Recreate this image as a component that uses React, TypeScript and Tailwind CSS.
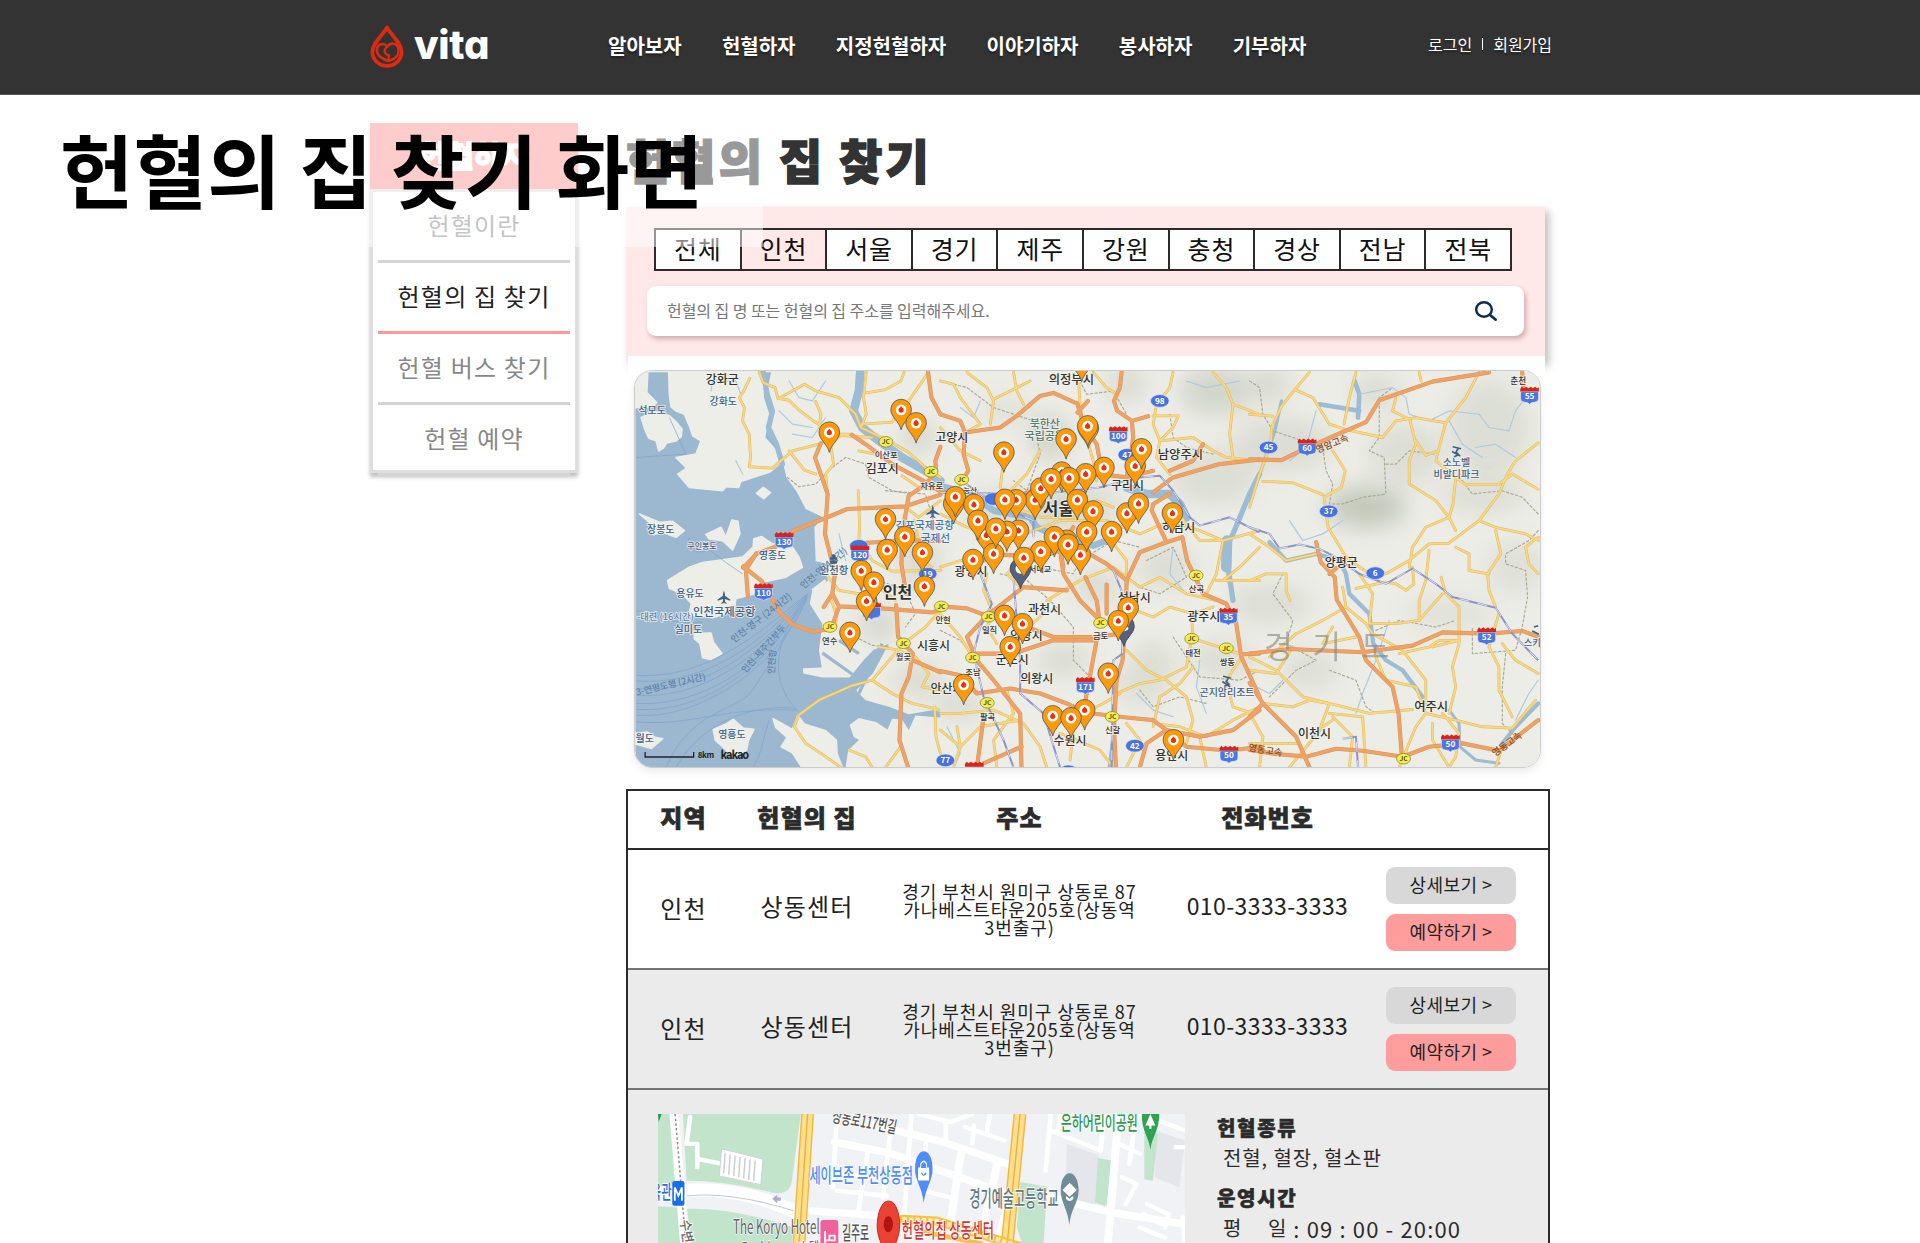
import React from "react";

type Pt = [number, number];
type Tag = [number, number, string];
type Label = [number, number, string, number, string?, number?];

/* The region map is drawn in three side-by-side panes at three units per pixel. */
const PANES = ["translate(625 360) scale(0.33333)", "translate(940 360) scale(0.33333)", "translate(1250 360) scale(0.33333)"];

const LAND = [
  "M28,34 65,34 62,95 92,125 75,138 28,140Z",
  "M128,34 410,34 412,110 428,160 416,230 447,265 460,310 432,334 345,362 338,380 300,378 290,390 190,380 155,340 182,322 150,290 210,280 225,240 200,225 190,195 175,160 150,150 135,138 130,100Z",
  "M45,170 85,152 130,165 152,185 168,205 165,228 150,240 122,246 112,262 98,270 90,240 68,232 56,205Z",
  "M125,660 190,620 230,606 350,590 382,560 384,535 408,528 440,550 500,560 520,590 530,620 480,650 400,668 385,700 330,715 325,750 300,760 260,772 190,762 196,730 170,700 130,684Z",
  "M40,460 100,485 140,482 175,510 150,530 110,515 82,522 78,492Z",
  "M240,522 285,500 300,530 318,478 336,482 342,520 320,568 290,540 250,535Z",
  "M392,398 412,380 434,396 414,414Z",
  "M205,820 255,818 262,845 288,880 256,898 230,892 222,850 205,835Z",
  "M262,1108 300,1092 322,1078 352,1104 384,1108 368,1140 362,1170 320,1190 290,1160 268,1140Z",
  "M28,1120 64,1116 86,1132 110,1136 76,1165 28,1152Z",
  "M442,1076 500,1108 516,1066 536,1092 600,1112 632,1140 634,1180 650,1222 528,1222 500,1178 466,1160 484,1132 450,1102Z",
];
const SEA =
  "M28,34 408,34 436,34 424,90 442,150 432,200 452,240 470,300 482,350 512,392 540,445 592,470 566,500 570,602 604,610 606,662 560,690 552,730 590,790 580,870 588,922 532,924 532,940 590,952 672,952 714,900 744,868 790,850 742,940 692,990 720,1020 790,1040 850,1062 920,1050 945,1055 945,1072 870,1066 850,1110 830,1078 800,1076 786,1108 752,1086 700,1074 672,1094 684,1130 700,1140 668,1170 660,1222 28,1222Z";

const ORANGE: string[][] = [
  [
    "500,512 600,472 665,445 840,437 945,402",
    "585,248 568,290 606,400 598,520 628,640 620,700 594,740",
    "678,222 720,250 800,310 890,358 945,392",
    "945,258 930,300 932,330 900,372 850,405 830,520 828,612 842,700",
    "908,34 918,110 945,160",
    "620,700 640,738 770,744 920,756 945,748",
    "640,740 616,806 560,814 500,792 462,756 408,662 352,618",
    "392,578 360,628 366,706",
    "450,558 392,580 352,622",
    "812,734 818,830 862,880 850,950 828,1000 822,1140 848,1222",
    "866,902 945,936",
    "700,548 830,540 945,540",
  ],
  [
    "0,160 60,180 74,215 70,280 84,330 60,370",
    "74,215 180,200 230,165 300,105 340,96 412,128 430,190 470,250 480,300",
    "545,34 540,80 522,120 532,150 576,180 580,230 570,300 560,350",
    "576,180 625,166",
    "0,390 100,420 180,410 250,400 300,380 400,360 480,340 560,350 640,330",
    "640,395 700,350 770,330 840,310 960,296",
    "690,330 760,300 790,250",
    "130,600 152,580 300,590 360,570 370,640 420,720 480,780 540,800",
    "370,560 430,570 500,610 560,660 558,760 548,900 530,960 522,1100 528,1222",
    "560,660 600,575 680,545 636,450 640,430 690,400",
    "680,545 728,530 742,600 790,700 860,730 890,790 905,890 960,1010",
    "0,738 80,744 140,766 250,680 380,690",
    "140,766 210,770 260,800 340,830 470,830 540,820",
    "140,766 80,830 110,900 160,960 240,1060 244,1222",
    "100,880 220,880 340,840 470,840 440,1000 430,1060",
    "0,932 60,945 110,1000 210,985 300,1000 380,1030 440,1058 560,1072 640,1080 680,1110 780,1130 880,1110 960,1050",
    "436,650 470,720 480,790",
    "500,672 500,760",
    "244,1160 130,1210",
    "130,1070 110,1222",
    "680,1110 620,1150 600,1222",
    "905,882 960,880",
    "690,1120 740,1160 868,1172 960,1160",
    "400,500 360,560 370,620",
    "444,120 412,155",
  ],
  [
    "0,296 96,298 150,272 270,218 350,184 390,118 550,62 720,34",
    "200,545 214,605 256,650 262,718 330,830 350,900 430,980 448,1060 458,1190",
    "0,880 120,866 340,876 490,856 580,816 720,820 820,812 870,830",
    "0,968 40,1030 140,1130 180,1222",
    "40,1030 0,1070",
    "0,1170 80,1182 170,1190 260,1166 340,1172 460,1190 540,1160 640,1150 750,1172 868,1080",
    "820,34 824,90",
    "240,640 262,622",
  ],
];

const YELLOW: string[][] = [
  [
    "372,52 354,90 340,110 356,140 350,180 370,220 374,290 370,318 440,322 500,270 580,250 650,224 740,230",
    "400,34 412,65 448,80 456,112 490,118 520,148 560,178 600,204 640,220 680,220",
    "460,112 536,70 570,90 640,110 690,160 706,200",
    "570,122 586,160 582,190 600,210",
    "490,270 536,328 570,340",
    "722,34 714,110 722,160 706,200 790,240 850,275 900,320 945,350",
    "722,96 780,86 826,60 836,34",
    "710,190 800,184 850,120 905,40",
    "698,390 702,490 700,540 740,600 800,632 945,630",
    "616,260 624,310 600,340 606,400",
    "600,640 640,690 700,700 760,680 810,720",
    "615,715 632,760 630,800",
    "740,960 680,976 580,1020 520,1064 506,1100 540,1150 600,1190 646,1222",
    "740,960 800,890 834,850 900,800 945,750",
    "740,960 800,1000 860,1030 940,1048",
    "928,1040 932,1130 945,1180",
    "760,860 810,868 870,890 910,940 890,980 945,990",
    "866,480 880,540 870,590 920,620",
    "840,440 880,470 945,420",
    "670,1170 720,1190 740,1222",
    "830,345 880,380 945,390",
    "780,1222 826,1160",
    "700,270 760,282",
  ],
  [
    "0,60 40,70 60,110 120,190 84,210",
    "80,34 140,80 160,120 150,190",
    "270,60 160,115",
    "220,34 230,90 250,130",
    "416,60 420,130 430,200 460,300 470,360",
    "460,34 500,80 530,100",
    "700,34 690,80 650,130 640,190 660,240 650,290 690,340",
    "640,165 716,165 700,200 660,240 760,230 820,270 860,290 960,300",
    "820,34 860,80 880,130 960,160",
    "880,130 870,220 880,290",
    "0,200 60,270 120,300",
    "190,300 180,380 220,440 300,470 400,470 470,420 520,440",
    "0,460 80,500 200,540 360,480 500,480 600,520 690,480 780,510 850,540 960,510",
    "490,510 560,600 560,650",
    "0,620 60,600 130,600",
    "140,640 130,690 160,760 140,800 170,850",
    "320,720 420,660 520,620 600,680 660,650 740,700 830,720",
    "700,440 780,540 850,540 830,640 800,700",
    "330,720 300,770 230,830",
    "0,760 60,830 97,892 160,960",
    "560,740 640,770 690,740 760,760 820,740",
    "755,760 760,835 900,880",
    "756,835 740,920 660,960 600,970 530,1000",
    "760,920 720,970 660,1010 640,1100",
    "560,870 620,930 680,960 740,1010 760,1080 740,1150",
    "540,1000 490,1030 430,1060 400,1110 390,1200",
    "0,1060 60,1060 160,1050 250,1090 300,1160 320,1222",
    "0,1110 60,1160 120,1100 240,1080",
    "40,1222 60,1160 50,1100",
    "640,1090 720,1100 800,1130 880,1080 960,1040",
    "560,1090 600,1140 560,1222",
    "780,1130 800,1222",
    "200,990 220,1060 160,1140 170,1222",
    "360,1120 480,1170 520,1222",
    "270,560 200,640 240,680",
    "830,660 960,660",
    "960,560 900,620 850,660",
    "900,900 860,960 880,1040 940,1060",
    "300,270 260,340 200,400",
  ],
  [
    "180,34 136,86 96,136 66,200 64,250 30,340 0,440",
    "136,86 190,110 240,190 290,206 400,230 440,180 500,170 590,186 650,110 690,34",
    "320,34 300,110 284,190",
    "0,160 70,166",
    "250,270 288,330 276,380 224,410 236,500 290,590 360,640 410,640 480,600 540,550 600,548 690,480 720,440 750,400 775,340 800,300 868,246",
    "40,362 130,366 220,402",
    "440,110 430,150 482,176 500,250 480,300 480,370 560,420 600,470 620,510",
    "590,186 570,260 560,300 620,350 612,430 600,470 530,500 490,560 480,620",
    "500,240 530,284 566,270",
    "620,350 650,372 750,370 790,340 868,386",
    "690,480 740,500 830,520 868,540",
    "740,510 756,580 716,640 720,690 740,740",
    "620,560 660,580 660,630 720,640",
    "0,520 60,560 110,600 200,580",
    "0,660 50,640 110,640 110,690 122,720",
    "540,570 530,660 510,720 510,780",
    "576,650 590,700 630,740 630,850 610,920 620,980 600,1060",
    "320,684 410,665 440,670 470,690 494,670 490,620",
    "280,680 290,740 350,790 370,820 460,870 530,960 530,1040",
    "330,640 370,700 360,790 440,790 510,780 580,700",
    "290,740 220,780 140,820 60,890",
    "250,800 220,850 320,830",
    "0,890 80,930 160,1010 240,1030 360,1060 490,1048",
    "40,1030 130,1040 180,1020 240,1030 210,1110",
    "0,930 80,940 130,860",
    "240,1060 340,1070 350,1222",
    "120,1222 220,1100 250,1080",
    "380,890 410,960 500,980 530,1060 620,1080 700,1100 790,1104 860,1020",
    "450,1222 500,1100 530,1060",
    "300,1222 310,1130 250,1070",
    "550,1090 550,1140 600,1222",
    "580,1060 630,1120 620,1190 600,1222",
    "750,760 720,860 750,920 750,990 790,1070",
    "760,850 800,900 868,940",
    "0,1150 150,1150",
    "740,1222 760,1160",
    "868,530 830,560 840,610 868,640",
    "550,860 630,840 570,840 540,860 450,880",
    "30,1222 40,1130 0,1060",
    "510,34 516,60",
  ],
];

const RIVERS: [number, string, number][] = [
  [0, "412,34 424,100 440,150 428,200 452,250 470,310", 16],
  [0, "704,34 700,90 684,150 710,200 760,240 830,290 900,330 945,360", 26],
  [1, "0,376 90,400 160,450 270,470 290,500 380,540 460,555 500,540", 20],
  [1, "560,380 620,400 690,400 720,430 740,470", 26],
  [1, "960,340 930,400 880,520 860,560 868,640 880,720", 16],
  [1, "862,540 860,620", 32],
  [1, "520,1140 510,1222", 14],
  [2, "96,120 76,210 20,370 0,420", 10],
  [2, "316,60 330,100 326,170", 14],
  [2, "210,130 270,140 330,150", 14],
  [2, "60,545 110,600 200,580 270,600 290,640 300,700 360,760 372,850 410,900 460,930 520,1010", 13],
  [2, "600,1050 630,1090 632,1160 680,1200 750,1210", 9],
  [2, "868,1030 800,1100 760,1150", 12],
];
const STREAMS: [number, string][] = [
  [2, "330,100 380,90 430,80 470,110 480,160 540,180 600,150 690,160 720,200 780,210 800,150 830,110"],
  [2, "420,780 380,900 340,1000 320,1060"],
  [2, "120,480 160,540 220,520 280,480"],
  [2, "868,960 840,1000 800,1080"],
  [2, "600,180 640,250 700,290"],
  [2, "200,150 170,260 120,300"],
  [0, "490,60 520,110 560,120 600,60"],
  [0, "500,220 560,230 600,170"],
  [0, "460,150 500,190 560,200"],
  [0, "640,520 660,600"],
  [0, "330,300 350,340"],
  [0, "255,90 260,60 330,60 345,100"],
  [1, "740,60 800,80 900,60"],
  [1, "700,560 690,640 730,690"],
  [1, "780,900 770,980 800,1060"],
  [1, "590,1000 640,1050 700,1070"],
  [1, "120,120 100,170 60,140"],
  [1, "20,1100 60,1180 40,1222"],
  [2, "100,960 60,1000 20,980"],
  [2, "680,260 740,250 800,290"],
];
const RAILS: [number, string][] = [
  [1, "60,357 120,400 190,440 280,480 280,530"],
  [1, "0,395 300,400 480,380 600,350 660,345 700,390 750,470 780,495 870,470 960,515"],
  [1, "120,640 155,730 120,800 100,880 130,1010 190,1140 220,1222"],
  [1, "520,630 545,690 548,880 520,900 515,1222"],
  [1, "220,660 240,900 240,1000 310,1060 360,1222"],
  [2, "0,500 60,520 90,564 150,552 210,565 260,590 330,640 410,670 490,624 560,670 610,710 740,742 790,820 868,900"],
  [2, "280,1136 320,1130 326,1222"],
];
const BORDERS: [number, string][] = [
  [0, "485,350 520,378 570,370 620,320 660,290 720,310 730,350 800,390 860,400 890,380"],
  [0, "720,600 760,660 840,690 870,760 840,800"],
  [0, "780,390 900,400 930,500"],
  [0, "690,830 740,855 790,860"],
  [1, "0,60 80,80 160,140 280,180 300,280 260,390 220,360"],
  [1, "420,60 440,100 520,90 560,160"],
  [1, "690,160 700,230 740,260 820,280"],
  [1, "240,560 300,620 400,640 420,600 520,540 600,560"],
  [1, "620,600 700,560 740,650 660,700 600,680"],
  [1, "180,640 260,660 330,720 400,800 400,900 460,960 420,1040"],
  [1, "0,810 60,840 130,920"],
  [1, "700,830 780,950 900,960 960,930"],
  [1, "600,990 640,1040 720,1010 800,1030"],
  [2, "0,60 30,80 40,160 70,210 160,240 220,260 230,330 250,370 240,430 280,430 340,410 410,400 405,290 360,270 390,230 390,110 430,80"],
  [2, "410,310 440,310 480,270 560,280"],
  [2, "640,360 670,400 760,390 820,410 868,460"],
  [2, "868,510 840,540 770,580 770,610 830,630 836,710 820,800 800,870 670,880 670,800"],
  [2, "100,640 70,700 130,780 110,850 200,900 140,930 60,1010"],
  [2, "380,810 450,780 560,800 620,780"],
  [2, "240,930 320,960 350,1040 380,1060"],
  [2, "770,880 760,980 760,1090 800,1130"],
];
const RELIEF: [number, number, number, number, number, number][] = [
  [2, 350, 440, 120, 60, 0.32], [2, 100, 250, 150, 80, 0.13], [2, 470, 280, 110, 90, 0.12], [2, 720, 200, 120, 140, 0.12],
  [2, 700, 400, 130, 60, 0.11], [2, 60, 730, 130, 60, 0.12], [2, 180, 930, 90, 60, 0.11], [2, 60, 70, 60, 50, 0.16], [2, 800, 620, 90, 80, 0.1],
  [2, 600, 760, 140, 50, 0.09], [2, 380, 90, 70, 60, 0.12],
  [1, 830, 90, 110, 70, 0.2], [1, 560, 70, 60, 50, 0.16], [1, 820, 350, 130, 80, 0.12], [1, 330, 230, 60, 70, 0.2],
  [1, 470, 680, 70, 50, 0.14], [1, 680, 620, 90, 70, 0.12], [1, 850, 900, 100, 60, 0.12], [1, 370, 900, 80, 50, 0.14], [1, 640, 900, 70, 60, 0.11],
  [1, 600, 980, 90, 60, 0.1], [1, 200, 150, 80, 40, 0.1], [1, 220, 450, 160, 60, 0.13], [1, 60, 1040, 80, 40, 0.15], [1, 420, 440, 120, 80, 0.12],
  [0, 880, 230, 50, 50, 0.18], [0, 760, 790, 60, 50, 0.18], [0, 880, 600, 70, 90, 0.13], [0, 880, 960, 80, 50, 0.14],
];
const PINS: Pt[][] = [
  [[611, 215], [827, 147], [872, 187], [780, 476], [785, 568], [838, 529], [891, 576], [707, 631], [897, 678], [723, 722], [745, 666], [673, 817]],
  [
    [425, 2], [191, 275], [445, 203], [443, 196], [378, 235], [586, 316], [605, 265], [365, 335], [492, 321], [437, 340], [387, 352], [285, 418],
    [302, 383], [333, 355], [40, 430], [45, 409], [101, 432], [228, 418], [194, 417], [412, 418], [459, 452], [561, 458], [596, 429], [698, 458],
    [138, 524], [113, 480], [235, 510], [200, 513], [160, 580], [167, 504], [98, 598], [302, 573], [251, 592], [380, 540], [343, 529], [421, 583],
    [384, 552], [440, 514], [515, 514], [193, 766], [247, 791], [210, 860], [565, 742], [535, 782], [505, 940], [70, 974], [434, 1050], [338, 1068],
    [393, 1074], [701, 1140],
  ],
  [],
];
const NAVY_PINS: Pt[] = [[241, 625], [552, 798]];
const SHIELDS: Tag[][] = [
  [[475, 541, "130"], [413, 695, "110"], [703, 580, "120"], [738, 752, ""]],
  [[535, 223, "100"], [436, 977, "171"], [866, 769, "35"], [868, 1184, "50"], [102, 1232, ""]],
  [[173, 260, "60"], [842, 104, "55"], [713, 828, "52"], [604, 1150, "50"]],
];
const OVALS: Tag[][] = [
  [[907, 640, "19"], [700, 556, ""]],
  [[660, 120, "98"], [562, 282, "47"], [585, 1157, "42"], [15, 1201, "77"], [160, 415, ""], [385, 1234, ""]],
  [[57, 260, "45"], [238, 452, "37"], [378, 638, "6"]],
];
const JUNCTIONS: Pt[][] = [
  [[781, 243], [917, 333], [613, 800], [834, 849], [948, 738]],
  [[64, 357], [145, 769], [97, 892], [141, 1028], [482, 788], [769, 645], [756, 835], [860, 864], [517, 1070]],
  [[463, 1196]],
];
const SEA_INK = "#3f6186";
const LABELS: Label[][] = [
  [
    [289, 68, "강화군", 36], [292, 131, "강화도", 30, SEA_INK], [78, 158, "석모도", 30, SEA_INK], [104, 516, "장봉도", 30, SEA_INK],
    [440, 594, "영종도", 30, SEA_INK], [228, 564, "구인봉도", 24, SEA_INK], [192, 710, "용유도", 30, SEA_INK], [295, 767, "인천국제공항", 34, SEA_INK],
    [187, 818, "실미도", 30, SEA_INK], [318, 1134, "영흥도", 30, SEA_INK], [56, 1145, "월도", 30, SEA_INK], [625, 640, "인천항", 31, SEA_INK],
    [770, 338, "김포시", 36], [782, 293, "이산포", 25], [919, 384, "자유로", 25], [898, 506, "김포국제공항", 32, "#3f74b0"], [930, 545, "국제선", 32, "#3f74b0"],
    [612, 850, "연수", 25], [834, 900, "월곶", 25], [816, 712, "인천", 48], [924, 868, "시흥시", 36], [953, 787, "안현", 25],
    [118, 778, "-대련 (16시간)", 28, "#5b82ad"], [412, 780, "인천-영구 (24시간)", 28, "#6084ab", -38], [420, 872, "인천-제주간부두", 27, "#6084ab", -48],
    [448, 905, "인천항", 27, "#6084ab", -86], [136, 982, "3-연평도행 (2시간)", 27, "#5b82ad", -13], [600, 630, "인천-연(4시간)", 28, "#6084ab", -40],
  ],
  [
    [394, 68, "의정부시", 37], [314, 200, "북한산", 33, "#5d7a76"], [314, 238, "국립공원", 33, "#5d7a76"], [34, 244, "고양시", 36], [722, 295, "남양주시", 37],
    [563, 388, "구리시", 36], [355, 464, "서울", 50], [717, 513, "하남시", 36], [92, 646, "광명시", 36], [300, 634, "서대교", 24], [770, 694, "산곡", 25],
    [583, 724, "성남시", 36], [313, 761, "과천시", 36], [148, 818, "일직", 25], [482, 836, "금토", 25], [792, 783, "광주시", 36], [258, 838, "의왕시", 36],
    [216, 911, "군포시", 36], [98, 943, "조남", 25], [290, 968, "의왕시", 36], [20, 997, "안산시", 36], [760, 886, "태전", 25], [863, 914, "쌍동", 25],
    [862, 1006, "곤지암리조트", 30, SEA_INK], [142, 1079, "팔곡", 25], [390, 1156, "수원시", 36], [518, 1120, "신갈", 25], [696, 1200, "용인시", 36], [90, 398, "능산", 22],
  ],
  [
    [808, 68, "춘천", 26], [622, 316, "소노벨", 30, SEA_INK], [622, 351, "비발디파크", 30, SEA_INK], [276, 620, "양평군", 36], [546, 1053, "여주시", 37], [195, 1133, "이천시", 36],
    [252, 258, "영암고속", 28, "#8a4a22", -22], [780, 1160, "영동고속", 28, "#8a4a22", -36], [46, 1180, "영동고속", 28, "#8a4a22", 10], [850, 858, "스키", 28, SEA_INK],
  ],
];

const PIN = "M0,60 C-6,34 -31,22 -31,-1 A31,31 0 1 1 31,-1 C31,22 6,34 0,60Z";
const PLANE = "M0,-19 3,-8 3,-3 19,8 19,12 3,7 3,15 8,19 8,21 0,19 -8,21 -8,19 -3,15 -3,7 -19,12 -19,8 -3,-3 -3,-8Z";

function Roads({ sets, edge, fill, w }: { sets: string[][]; edge: string; fill: string; w: number }) {
  return (
    <g fill="none" strokeLinejoin="round" strokeLinecap="round">
      {[0, 1].map((pass) =>
        sets.map((s, p) => (
          <g key={`${pass}-${p}`} transform={PANES[p]} stroke={pass ? fill : edge} strokeWidth={pass ? w : w + 3}>
            {s.map((pts, i) => <polyline key={i} points={pts} />)}
          </g>
        )),
      )}
    </g>
  );
}

function RegionMap() {
  return (
    <svg viewBox="634 370 907 397" className="block h-full w-full font-['Noto_Sans_CJK_KR',sans-serif]">
      <defs>
        <filter id="relief" x="-80%" y="-80%" width="260%" height="260%"><feGaussianBlur stdDeviation="34" /></filter>
      </defs>
      <rect x="634" y="370" width="907" height="397" fill="#ecede7" />
      {RELIEF.map(([p, x, y, rx, ry, o], i) => (
        <g key={i} transform={PANES[p]}><ellipse cx={x} cy={y} rx={rx} ry={ry} fill="#6f7a5c" opacity={o} filter="url(#relief)" /></g>
      ))}
      <g transform={PANES[0]}>
        <path d={SEA} fill="#9cb8d0" />
        {LAND.map((d, i) => <path key={i} d={d} fill="#edeee8" strokeLinejoin="round" stroke="#edeee8" strokeWidth="5" />)}
        <path d="M590,878 680,942 M700,1000 770,850 M640,840 700,880" stroke="#9cb8d0" strokeWidth="10" fill="none" />
        <path d="M560,690 600,660 M555,720 600,740" stroke="#ecede7" strokeWidth="9" />
        <g fill="none" stroke="#7fa3cb" strokeWidth="2.5" opacity="0.85">
          <path d="M30,290 180,280 130,170" />
          <path d="M545,700 C420,800 250,960 30,945" />
          <path d="M545,700 C420,830 250,980 30,962" />
          <path d="M545,702 C420,850 250,1000 30,985" />
          <path d="M545,704 C430,870 240,1020 30,1005" />
          <path d="M545,706 C440,890 250,1040 30,1030" />
          <path d="M545,708 C440,900 250,1060 30,1048" />
          <path d="M545,710 C450,940 200,1080 30,1065" />
          <path d="M30,1085 C200,1100 280,1040 515,1050" />
          <path d="M545,700 C440,850 430,960 515,1052" />
          <path d="M120,1222 C200,1040 330,1060 380,990 C440,900 500,800 545,712" />
          <path d="M150,1222 C230,1080 390,1030 510,1045" />
          <path d="M30,750 C120,780 160,790 230,786" />
          <path d="M240,560 C290,600 320,620 350,640" />
          <path d="M380,1222 C410,1180 410,1140 430,1080" />
          <path d="M190,530 C180,560 200,580 240,572" />
        </g>
      </g>
      <g fill="none" strokeLinejoin="round" strokeLinecap="round">
        {RIVERS.map(([p, d, w], i) => <g key={i} transform={PANES[p]}><polyline points={d} stroke="#9cbbd4" strokeWidth={w} /></g>)}
        {STREAMS.map(([p, d], i) => <g key={i} transform={PANES[p]}><polyline points={d} stroke="#adc9de" strokeWidth="3.5" /></g>)}
        {BORDERS.map(([p, d], i) => <g key={i} transform={PANES[p]}><polyline points={d} stroke="#aaa892" strokeWidth="3.5" strokeDasharray="7 7" /></g>)}
      </g>
      <Roads sets={YELLOW} edge="#deba66" fill="#fad67c" w={5.5} />
      <Roads sets={ORANGE} edge="#d7935e" fill="#f0a263" w={9.5} />
      <g fill="none" strokeLinejoin="round">
        {RAILS.map(([p, d], i) => (
          <g key={i} transform={PANES[p]}>
            <polyline points={d} stroke="#8c95c4" strokeWidth="6" />
            <polyline points={d} stroke="#dfe2f0" strokeWidth="3" strokeDasharray="30 26" />
          </g>
        ))}
      </g>
      <g transform={PANES[2]}>
        <text x="232" y="892" fontSize="94" textAnchor="middle" fill="#85867c" opacity="0.6" textLength="378">경 기 도</text>
      </g>
      {PANES.map((t, p) => (
        <g key={p} transform={t}>
          {OVALS[p].map(([x, y, s], i) => (
            <g key={i}>
              <ellipse cx={x} cy={y} rx="28" ry="19" fill="#4671df" stroke="#dfe5f2" strokeWidth="2" />
              <text x={x} y={y + 9} fontSize="25" fontWeight="700" fill="#fff" textAnchor="middle">{s}</text>
            </g>
          ))}
          {JUNCTIONS[p].map(([x, y], i) => (
            <g key={i}>
              <ellipse cx={x} cy={y} rx="21" ry="16" fill="#f6ec4e" stroke="#8d8a3c" strokeWidth="2.5" />
              <text x={x} y={y + 7} fontSize="20" fontWeight="700" fill="#55531f" textAnchor="middle">JC</text>
            </g>
          ))}
          {SHIELDS[p].map(([x, y, s], i) => (
            <g key={i} transform={`translate(${x} ${y})`}>
              <path d="M-27,-12 H27 V10 Q26,20 14,20 Q4,20 0,26 Q-4,20 -14,20 Q-26,20 -27,10Z" fill="#4a75e3" stroke="#e6eaf3" strokeWidth="2" />
              <path d="M-28,-12 V-20 L-23,-27 -17,-22 -10,-27 -3,-22 4,-27 10,-22 17,-27 23,-22 28,-25 V-12Z" fill="#d8241d" />
              <text y="11" fontSize="25" fontWeight="700" fill="#fff" textAnchor="middle">{s}</text>
            </g>
          ))}
          {LABELS[p].map(([x, y, s, size, ink, rot], i) => (
            <text
              key={i}
              transform={`translate(${x} ${y}) rotate(${rot ?? 0})`}
              fontSize={size}
              fontWeight={size > 40 ? 700 : 500}
              textAnchor="middle"
              fill={ink ?? "#333"}
              stroke={rot ? "none" : "#f3f4ef"}
              strokeWidth="5"
              strokeOpacity="0.85"
              paintOrder="stroke"
            >
              {s}
            </text>
          ))}
        </g>
      ))}
      <g fill="#3f6186">
        <g transform={PANES[0]}>
          <path d={PLANE} transform="translate(294 709)" />
          <path d={PLANE} transform="translate(922 451)" />
          <path d="M618,582 h12 v8 h5 v8 h-22 v-8 h5Z M612,600 h24 l-3,10 h-18Z" />
          <path d="M57,1176 V1191 H203 V1176" fill="none" stroke="#222" strokeWidth="4" />
          <text x="240" y="1195" fontSize="24" fontWeight="700" fill="#222" textAnchor="middle" textLength="50">8km</text>
          <text x="327" y="1196" fontSize="33" fontWeight="700" fill="#222" textAnchor="middle" textLength="86">kakao</text>
        </g>
        <g transform={PANES[1]} fill="none" stroke="#3f6186" strokeWidth="5"><path d="M850,948 875,954 M868,950 860,964 868,972 854,978 M848,964 872,980" /></g>
        <g transform={PANES[2]} fill="none" stroke="#3f6186" strokeWidth="5">
          <path d="M611,258 636,264 M629,260 621,274 629,282 615,288 M609,272 634,286" />
          <path d="M855,800 868,796 M850,812 870,822" />
        </g>
      </g>
      <g transform={PANES[1]}>
        {NAVY_PINS.map(([x, y], i) => (
          <g key={i} transform={`translate(${x} ${y})`}><path d={PIN} fill="#56617f" stroke="#434a5c" strokeWidth="3" /><circle r="15" fill="#fff" /></g>
        ))}
      </g>
      {PANES.map((t, p) => (
        <g key={p} transform={t}>
          {PINS[p].map(([x, y], i) => (
            <g key={i} transform={`translate(${x} ${y})`}>
              <path d={PIN} fill="#fd9a08" stroke="#55555a" strokeWidth="2.5" />
              <circle r="16" fill="#fff" />
              <path d="M0,-11 C3,-7 8,-4 8,1 A8,7.500 0 1 1 -8,1 C-8,-4 -3,-7 0,-11Z" fill="#e6311c" />
            </g>
          ))}
        </g>
      ))}
    </svg>
  );
}

function StreetMap() {
  return (
    <svg viewBox="50 101 1476 388" preserveAspectRatio="none" className="block h-full w-full font-['Noto_Sans_CJK_KR',sans-serif]">
      <rect x="50" y="101" width="1476" height="400" fill="#f0f2f5" />
      <path d="M50,101 H450 L425,300 Q420,345 370,335 Q240,300 130,300 L120,101 90,101 118,310 50,320Z" fill="#c1e4cb" />
      <path d="M50,376 110,380 120,489 50,489Z M132,384 Q260,380 430,440 L425,489 H140Z" fill="#c1e4cb" />
      <path d="M50,101 h10 l-8,24Z" fill="#1f9a48" />
      <path d="M1195,190 1285,225 1275,380 1190,360Z M1445,150 1526,180 1510,320 1440,290Z" fill="#e4e6ec" />
      <path d="M1282,232 1320,240 1306,376 1274,366Z M1412,150 1450,160 1436,300 1412,296Z M1065,304 1140,318 1130,489 1070,489 1055,440Z" fill="#c1e4cb" />
      <g fill="none" stroke="#fff" strokeLinecap="round" strokeLinejoin="round">
        <g strokeWidth="22">
          <path d="M545,185 700,218 1030,340 M640,130 850,185 1030,250 M900,210 870,420 M1000,250 960,440" />
          <path d="M1150,350 1320,395 1526,430 M1340,101 1310,489" />
          <path d="M480,390 Q600,400 760,410 M1030,380 1000,480" />
        </g>
        <g strokeWidth="13">
          <path d="M550,120 540,320 M640,200 610,400 M700,160 680,350 M760,101 740,400 M545,270 680,300 M800,190 790,330 870,350 M550,330 690,345" />
          <path d="M780,101 870,125 930,101 M856,125 856,180 M910,140 1020,180 M980,101 970,160 M935,135 930,190" />
          <path d="M1150,150 1290,210 1300,101 M1150,101 1136,270 M1390,101 1370,250 M1340,190 1400,220 M1350,290 1390,310 1360,370 M1400,101 1526,150 M1180,101 1170,150 M1500,200 1526,200" />
          <path d="M1420,370 1480,400 1470,440 M1410,400 1460,430 M1400,440 1470,470 M1520,410 1526,489" />
          <path d="M140,110 130,190 160,190 160,260 M160,235 230,250" />
        </g>
        <path d="M95,101 125,489" strokeWidth="26" />
        <path d="M50,340 Q250,300 440,395" strokeWidth="40" />
      </g>
      <path d="M130,346 Q250,330 430,390" fill="none" stroke="#c3c8d0" strokeWidth="3" />
      <path d="M98,101 128,489" stroke="#888" strokeWidth="4" strokeDasharray="7 7" fill="none" />
      <path d="M228,205 344,235 338,312 222,286Z" fill="#fff" stroke="#cfd3d6" strokeWidth="3" />
      <path d="M238,218 l-4,60 M252,222 l-4,60 M266,226 l-4,60 M280,229 l-4,60 M294,232 l-4,62 M308,236 l-4,62 M322,240 l-4,60" stroke="#c9ced1" strokeWidth="4" />
      <g fill="none">
        <path d="M469,101 445,489" stroke="#f5b73a" strokeWidth="36" />
        <path d="M469,101 445,489" stroke="#fde08f" strokeWidth="28" />
        <path d="M469,101 445,489" stroke="#f2b032" strokeWidth="4" />
        <path d="M1064,101 1028,489" stroke="#f5b73a" strokeWidth="36" />
        <path d="M1064,101 1028,489" stroke="#fde08f" strokeWidth="28" />
        <path d="M1064,101 1028,489" stroke="#f2b032" strokeWidth="4" />
        <path d="M735,415 830,420 1060,495" stroke="#f7c240" strokeWidth="26" strokeLinecap="round" />
        <path d="M735,415 830,420 1060,495" stroke="#fdeab5" strokeWidth="14" strokeDasharray="12 6" />
        <path d="M780,450 960,489" stroke="#f7c240" strokeWidth="14" />
      </g>
      <path d="M370,354 l14,-12 v8 h10 v10 h-10 v8Z" fill="#a9accb" />
      <g stroke="#fff" strokeWidth="5" paintOrder="stroke" fontWeight="500">
        <text x="536" y="124" fontSize="50" fill="#555" transform="rotate(11 536 124)" textLength="182" lengthAdjust="spacingAndGlyphs">상동로117번길</text>
        <text x="474" y="306" fontSize="60" fill="#4c8ff5" textLength="290" lengthAdjust="spacingAndGlyphs">세이브존 부천상동점</text>
        <text x="922" y="376" fontSize="64" fill="#5f7983" textLength="250" lengthAdjust="spacingAndGlyphs">경기예술고등학교</text>
        <text x="1178" y="150" fontSize="58" fill="#2c9a52" textLength="216" lengthAdjust="spacingAndGlyphs">은하어린이공원</text>
        <text x="30" y="354" fontSize="58" fill="#2f6fd6" textLength="58" lengthAdjust="spacingAndGlyphs">육관</text>
        <text x="565" y="477" fontSize="56" fill="#555" textLength="76" lengthAdjust="spacingAndGlyphs">길주로</text>
        <text x="733" y="470" fontSize="62" fill="#cf3a34" textLength="258" lengthAdjust="spacingAndGlyphs">헌혈의집 상동센터</text>
        <text x="260" y="458" fontSize="60" fill="#6b6262" fontWeight="400" textLength="243" lengthAdjust="spacingAndGlyphs">The Koryo Hotel</text>
        <text x="284" y="520" fontSize="48" fill="#6b6262" fontWeight="400" textLength="218" lengthAdjust="spacingAndGlyphs">Residence 호텔</text>
        <text x="112" y="418" fontSize="38" fill="#666" transform="rotate(82 112 418)">수변로</text>
      </g>
      <rect x="90" y="301" width="34" height="74" rx="6" fill="#176ee8" />
      <path d="M97,360 V320 L107,345 117,320 V360" fill="none" stroke="#fff" strokeWidth="5" />
      <path d="M794,366 C790,320 770,300 770,265 C770,195 819,195 819,265 C819,300 800,320 794,366Z" fill="#4f8df6" />
      <path d="M780,262 h28 v36 h-28Z M786,262 V250 Q794,232 802,250 V262" fill="#fff" stroke="#fff" strokeWidth="3" />
      <path d="M787,262 V252 Q794,238 801,252 V262" fill="#4f8df6" />
      <path d="M788,276 Q794,292 801,276" fill="none" stroke="#4f8df6" strokeWidth="4" />
      <path d="M1202,432 C1198,385 1178,365 1178,330 C1178,260 1228,260 1228,330 C1228,365 1206,385 1202,432Z" fill="#6f8c98" />
      <path d="M1183,328 1203,306 1223,328 1203,348Z M1193,345 V355 Q1203,366 1213,355 V345 L1203,354Z" fill="#fff" />
      <path d="M1429,207 C1425,170 1404,150 1405,101 H1454 C1454,150 1433,170 1429,207Z" fill="#2fa450" />
      <path d="M1429,101 1443,135 H1432 V146 H1426 V135 H1415Z" fill="#fff" />
      <path d="M505,489 V426 Q505,417 512,417 H548 Q555,417 555,426 V489Z" fill="#f0609a" />
      <path d="M518,450 V489 M518,478 H545 V464 H530 V478" stroke="#fff" strokeWidth="5" fill="none" />
      <path d="M676,489 C668,470 663,455 664,430 C668,338 724,338 727,430 C727,455 722,470 715,489Z" fill="#ea4335" stroke="#c9302a" strokeWidth="3" />
      <ellipse cx="695" cy="430" rx="13" ry="24" fill="#b11313" />
    </svg>
  );
}

const NAV = ["알아보자", "헌혈하자", "지정헌혈하자", "이야기하자", "봉사하자", "기부하자"];
const REGIONS = ["전체", "인천", "서울", "경기", "제주", "강원", "충청", "경상", "전남", "전북"];
const COLS = "grid grid-cols-[111px_136px_289px_207px_160px] items-center justify-items-center";

function Header() {
  return (
    <header className="flex h-[95px] items-start border-b border-[#555] bg-[#333] text-white">
      <div className="ml-[370px] mt-6 flex h-[44px] w-[238px] shrink-0">
        <svg viewBox="0 0 34 44" className="h-[44px] w-[34px]" fill="none" stroke="#dc2b10" strokeLinejoin="round">
          <path d="M17,3.500 C13,11 2.400,19 2.400,28 A14.600,13.800 0 0 0 31.600,28 C31.600,19 21,11 17,3.500Z" strokeWidth="3.800" />
          <path d="M18,37 C10,34 6,29.500 7,24.500 C8.500,19 14.500,19 17.500,22.500 C21,18 27.500,19 28.500,25 C29.500,32 24,36 18,37Z" strokeWidth="2.600" />
          <path d="M17.500,22.500 C13,26 14,30 19,31.500 L18,37" strokeWidth="2.400" />
        </svg>
        <span className="-mt-[3px] ml-[10px] font-['Inter',sans-serif] text-[40px] font-extrabold leading-[48px] tracking-[-0.3px] [font-feature-settings:'cv11']">vita</span>
      </div>
      <nav className="mt-[30px] flex w-[820px] shrink-0 gap-[40.3px] text-[20px] font-bold leading-[32px] [text-shadow:0_2px_2px_rgba(0,0,0,.4)]">
        {NAV.map((n) => <span key={n}>{n}</span>)}
      </nav>
      <div className="mt-[30px] flex items-center text-[16px] leading-[28px] whitespace-nowrap [text-shadow:0_2px_2px_rgba(0,0,0,.4)]">
        <span>로그인</span>
        <i className="mx-[10px] h-[12px] w-px bg-white" />
        <span>회원가입</span>
      </div>
    </header>
  );
}

function Sidebar() {
  const items = [
    ["헌혈이란", "text-[#888]", "bg-[#d4d4d4]"],
    ["헌혈의 집 찾기", "text-[#222]", "bg-[#ff9999]"],
    ["헌혈 버스 찾기", "text-[#888]", "bg-[#d4d4d4]"],
    ["헌혈 예약", "text-[#888]", "bg-[#d4d4d4]"],
  ];
  return (
    <aside className="mt-[28px] h-[350px] w-[208px] shrink-0 bg-white shadow-[0_4px_4px_rgba(0,0,0,.25)]">
      <div className="flex h-[66px] items-center justify-center bg-[#ff9999] pb-[3px] text-[30px] font-black text-white [-webkit-text-stroke:1px_#fff]">헌혈하자</div>
      <ul className="h-[284px] border-[3px] border-[#dedede] px-[5px]">
        {items.map(([t, c, l]) => (
          <li key={t} className="flex h-[71px] flex-col">
            <span className={`flex flex-1 items-center justify-center whitespace-nowrap pb-[3px] text-[24px] tracking-[1.2px] ${c}`}>{t}</span>
            <i className={`h-[3px] ${l}`} />
          </li>
        ))}
      </ul>
    </aside>
  );
}

function SearchPanel() {
  return (
    <section className="h-[155px] w-[919px] bg-[#ffe8e8] pt-[21px] shadow-[4px_4px_8px_rgba(0,0,0,.25)]">
      <div className="ml-[28px] grid h-[43px] w-[858px] grid-cols-10 border-y-2 border-l-2 border-[#2b2b2b] bg-white">
        {REGIONS.map((r, i) => (
          <span key={r} className={`flex items-center justify-center border-r-2 border-[#2b2b2b] pb-[3px] text-[25px] leading-none tracking-[0.8px] text-[#111] ${i === 1 ? "bg-[#ffe8e8]" : ""}`}>{r}</span>
        ))}
      </div>
      <div className="ml-[21px] mt-[15px] flex h-[50px] w-[877px] items-center justify-between rounded-[9px] bg-white pl-[20px] pr-[27px] shadow-[2px_3px_5px_rgba(120,60,60,.35)]">
        <span className="-mt-[3px] text-[16px] tracking-[-0.05px] text-[#777]">헌혈의 집 명 또는 헌혈의 집 주소를 입력해주세요.</span>
        <svg viewBox="0 0 22 20" className="h-[20px] w-[22px]" fill="none" stroke="#102c57" strokeLinecap="round">
          <ellipse cx="9" cy="8.500" rx="7.800" ry="7.200" strokeWidth="2.500" />
          <path d="M15,14 20.500,18.500" strokeWidth="2.900" />
        </svg>
      </div>
    </section>
  );
}

function CenterRow({ tone }: { tone: string }) {
  return (
    <div className={`${COLS} h-[120px] border-b-2 border-[#747474] text-[#222] ${tone}`}>
      <span className="pb-[2px] text-[24px] tracking-[1.2px]">인천</span>
      <span className="pb-[6px] text-[24px] tracking-[1.2px]">상동센터</span>
      <span className="pb-[1px] text-center text-[18px] leading-[18px] tracking-[0.95px]">
        경기 부천시 원미구 상동로 87<br />가나베스트타운205호(상동역<br />3번출구)
      </span>
      <span className="pb-[8px] text-[23px] tracking-[0.4px]">010-3333-3333</span>
      <div className="flex flex-col gap-[10px] text-[18px] tracking-[0.45px]">
        <span className="flex h-[37px] w-[130px] items-center justify-center rounded-[9px] bg-[#d8d8d8] pb-[2px]">상세보기 &gt;</span>
        <span className="flex h-[37px] w-[130px] items-center justify-center rounded-[9px] bg-[#ff9d9d] pb-[2px]">예약하기 &gt;</span>
      </div>
    </div>
  );
}

export default function App() {
  return (
    <div className="relative h-[1243px] w-[1920px] overflow-hidden bg-white font-['Noto_Sans_CJK_KR',sans-serif]">
      <Header />
      <main className="flex items-start pl-[370px]">
        <Sidebar />
        <div className="ml-[48px] w-[924px] shrink-0">
          <h1 className="h-[112px] pt-[30px] text-[47px] font-black leading-[68px] tracking-[3.1px] text-[#333] [-webkit-text-stroke:1.6px_#333]">헌혈의 집 찾기</h1>
          <SearchPanel />
          <div className="relative -mt-[6px] ml-[2px] h-[433px] w-[917px] bg-white pl-[6px] pt-[14px]">
            <div className="h-[398px] w-[907px] overflow-hidden rounded-[18px] border border-[#ccc] shadow-[0_4px_8px_rgba(0,0,0,.08)]">
              <RegionMap />
            </div>
          </div>
          <section className="h-[500px] border-2 border-[#2b2b2b] bg-[#ebebeb]">
            <div className={`${COLS} h-[59px] border-b-2 border-[#2b2b2b] bg-white pb-[5px] text-[24px] font-black tracking-[1.1px] text-[#2b2b2b] [-webkit-text-stroke:0.7px_#2b2b2b]`}>
              <span>지역</span>
              <span>헌혈의 집</span>
              <span>주소</span>
              <span>전화번호</span>
            </div>
            <CenterRow tone="bg-white" />
            <CenterRow tone="bg-[#ebebeb]" />
            <div className="flex pl-[30px] pt-[24px] text-[#2b2b2b]">
              <div className="h-[130px] w-[527px] shrink-0"><StreetMap /></div>
              <div className="ml-[32px] whitespace-pre text-[20px] leading-[30px]">
                <div className="-mt-px font-black tracking-[1.7px] [-webkit-text-stroke:0.6px_#2b2b2b]">헌혈종류</div>
                <div className="ml-[6px] tracking-[0.9px]">전혈, 혈장, 혈소판</div>
                <div className="mt-[10px] font-black tracking-[1.7px] [-webkit-text-stroke:0.6px_#2b2b2b]">운영시간</div>
                <div className="ml-[6px] flex tracking-[0.8px]">
                  <span className="w-[45px]">평</span>
                  <span>일</span>
                  <span className="text-[22px] tracking-[1.15px]"> : 09 : 00 - 20:00</span>
                </div>
              </div>
            </div>
          </section>
        </div>
      </main>
      <div className="absolute left-0 top-[95px] h-[152px] w-[763px] bg-white/50 pl-[60px] pt-[14px]">
        <p className="whitespace-nowrap text-[80px] font-bold leading-[116px] text-black">헌혈의 집 찾기 화면</p>
      </div>
    </div>
  );
}
